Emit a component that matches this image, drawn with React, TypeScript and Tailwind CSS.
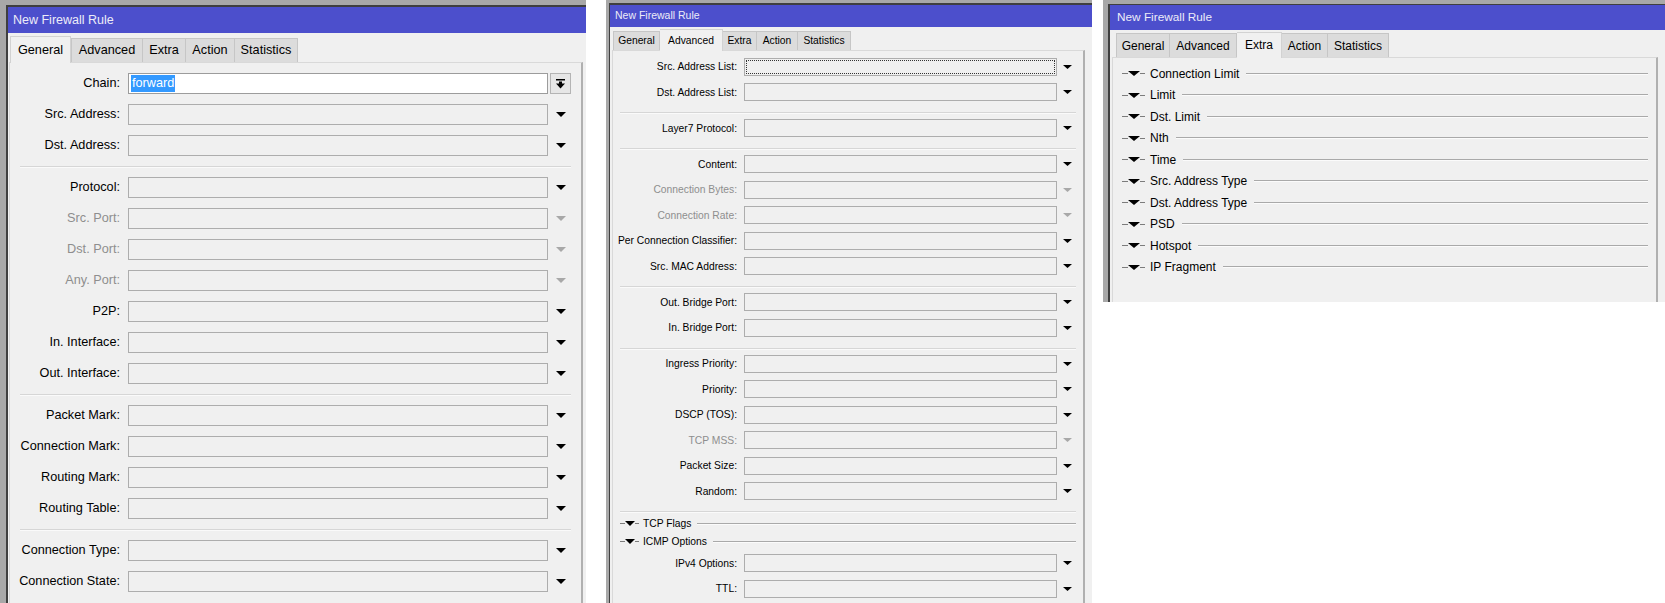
import React from "react";

function Arrow({ w, h, c = "#000" }: { w: number; h: number; c?: string }) {
  return (
    <svg width={w} height={h} viewBox={`0 0 ${w} ${h}`} className="block shrink-0">
      <polygon points={`0,0 ${w},0 ${w / 2},${h}`} fill={c} />
    </svg>
  );
}

type Row = { label: string; disabled?: boolean };

function LeftRow({ label, disabled }: Row) {
  return (
    <div className="flex items-center h-[31px] pr-[7px]">
      <div className={"w-[110px] text-right whitespace-nowrap " + (disabled ? "text-[#8e8e8e]" : "text-black")}>{label}:</div>
      <div className="ml-[8px] flex-1 h-[21px] border border-[#adadad] bg-[#f0f0f0]" />
      <div className="w-[26px] flex justify-center">
        <Arrow w={10} h={5} c={disabled ? "#a8a8a8" : "#000"} />
      </div>
    </div>
  );
}

function LeftSep() {
  return (
    <div className="h-[11px] flex flex-col justify-center px-[10px]">
      <div className="h-px bg-[#d6d6d6]" />
      <div className="h-px bg-[#fafafa]" />
    </div>
  );
}

function MidRow({ label, disabled, focus }: Row & { focus?: boolean }) {
  return (
    <div className="flex items-center h-[25.5px] pr-[6px]">
      <div className={"w-[124px] text-right whitespace-nowrap " + (disabled ? "text-[#8e8e8e]" : "text-black")}>{label}:</div>
      <div className="ml-[7px] flex-1 h-[18px] border border-[#adadad] bg-[#f0f0f0] p-px">
        {focus ? <div className="h-full w-full border border-dotted border-[#333]" /> : null}
      </div>
      <div className="w-[20px] flex justify-center">
        <Arrow w={9} h={4} c={disabled ? "#a8a8a8" : "#000"} />
      </div>
    </div>
  );
}

function MidSep() {
  return (
    <div className="h-[10.5px] pt-[7px] px-[7px]">
      <div className="h-px bg-[#d6d6d6]" />
      <div className="h-px bg-[#fafafa]" />
    </div>
  );
}

function MidHeader({ label }: { label: string }) {
  return (
    <div className="flex items-center h-[18px] pl-[7px] pr-[7px]">
      <div className="w-[5px] h-px bg-[#7c7c7c]" />
      <Arrow w={10} h={5} />
      <div className="w-[4px] h-px bg-[#7c7c7c]" />
      <div className="ml-[4px] text-black whitespace-nowrap">{label}</div>
      <div className="ml-[6px] flex-1 flex flex-col">
        <div className="h-px bg-[#a9a9a9]" />
        <div className="h-px bg-[#fbfbfb]" />
      </div>
    </div>
  );
}

function RightHeader({ label }: { label: string }) {
  return (
    <div className="flex items-center h-[21.5px] pl-[9px] pr-[8px]">
      <div className="w-[6px] h-px bg-[#7c7c7c]" />
      <Arrow w={12} h={5} />
      <div className="w-[5px] h-px bg-[#7c7c7c]" />
      <div className="ml-[5px] text-black whitespace-nowrap">{label}</div>
      <div className="ml-[7px] flex-1 flex flex-col">
        <div className="h-px bg-[#a9a9a9]" />
        <div className="h-px bg-[#fbfbfb]" />
      </div>
    </div>
  );
}

function ChainIcon() {
  return (
    <svg width="9" height="10" viewBox="0 0 9 10" className="block">
      <rect x="0" y="0" width="9" height="1.5" fill="#000" />
      <rect x="3" y="2.5" width="3" height="2.5" fill="#000" />
      <polygon points="0,4.5 9,4.5 4.5,9.5" fill="#000" />
    </svg>
  );
}

export default function App() {
  const leftG2: Row[] = [
    { label: "Protocol" },
    { label: "Src. Port", disabled: true },
    { label: "Dst. Port", disabled: true },
    { label: "Any. Port", disabled: true },
    { label: "P2P" },
    { label: "In. Interface" },
    { label: "Out. Interface" },
  ];
  const leftG3: Row[] = [
    { label: "Packet Mark" },
    { label: "Connection Mark" },
    { label: "Routing Mark" },
    { label: "Routing Table" },
  ];
  const leftG4: Row[] = [{ label: "Connection Type" }, { label: "Connection State" }];

  const midG3: Row[] = [
    { label: "Content" },
    { label: "Connection Bytes", disabled: true },
    { label: "Connection Rate", disabled: true },
    { label: "Per Connection Classifier" },
    { label: "Src. MAC Address" },
  ];
  const midG5: Row[] = [
    { label: "Ingress Priority" },
    { label: "Priority" },
    { label: "DSCP (TOS)" },
    { label: "TCP MSS", disabled: true },
    { label: "Packet Size" },
    { label: "Random" },
  ];
  const extra = [
    "Connection Limit",
    "Limit",
    "Dst. Limit",
    "Nth",
    "Time",
    "Src. Address Type",
    "Dst. Address Type",
    "PSD",
    "Hotspot",
    "IP Fragment",
  ];

  return (
    <div className="w-[1665px] h-[603px] bg-white flex items-start overflow-hidden font-['Liberation_Sans',Arial,sans-serif]">
      {/* LEFT WINDOW */}
      <div className="w-[586px] h-[603px] shrink-0 bg-[#a8a8a8] pt-[5px] pl-[6px]">
        <div className="h-full border-t-2 border-l-2 border-[#3f3f3f] bg-[#f0f0f0] flex flex-col text-[12.7px]">
          <div className="h-[26px] shrink-0 bg-[#4c4fcc] text-[#ececf8] flex items-center pl-[5px] text-[12.5px]">New Firewall Rule</div>
          <div className="relative z-10 flex items-end h-[26px] mt-[3px] pl-[2px] shrink-0">
            <div className="w-[61px] h-[27px] -mb-px bg-[#f0f0f0] border border-b-0 border-[#d2d2d2] flex justify-center pt-[4px] text-black">General</div>
            <div className="w-[72px] h-[24px] bg-[#dcdcdc] border border-b-0 border-[#c6c6c6] flex items-center justify-center text-black">Advanced</div>
            <div className="w-[43px] h-[24px] bg-[#dcdcdc] border border-b-0 border-l-0 border-[#c6c6c6] flex items-center justify-center text-black">Extra</div>
            <div className="w-[49px] h-[24px] bg-[#dcdcdc] border border-b-0 border-l-0 border-[#c6c6c6] flex items-center justify-center text-black">Action</div>
            <div className="w-[63px] h-[24px] bg-[#dcdcdc] border border-b-0 border-l-0 border-[#c6c6c6] flex items-center justify-center text-black">Statistics</div>
          </div>
          <div className="ml-[1px] w-[574px] flex-1 border border-b-0 border-[#d9d9d9] border-r-2 border-r-[#b0b0b0] pt-[5px]">
            <div className="flex items-center h-[31px] pr-[7px]">
              <div className="w-[110px] text-right text-black">Chain:</div>
              <div className="ml-[8px] flex-1 h-[21px] border border-[#9c9c9c] bg-white flex items-center pl-[2px]">
                <span className="bg-[#3399ff] text-white leading-[17px] px-px">forward</span>
              </div>
              <div className="w-[26px] flex items-center pl-[2px]">
                <div className="w-[21px] h-[21px] border border-[#b4b4b4] bg-[#e6e6e6] flex items-center justify-center">
                  <ChainIcon />
                </div>
              </div>
            </div>
            <LeftRow label="Src. Address" />
            <LeftRow label="Dst. Address" />
            <LeftSep />
            {leftG2.map((r) => (
              <LeftRow key={r.label} {...r} />
            ))}
            <LeftSep />
            {leftG3.map((r) => (
              <LeftRow key={r.label} {...r} />
            ))}
            <LeftSep />
            {leftG4.map((r) => (
              <LeftRow key={r.label} {...r} />
            ))}
          </div>
        </div>
      </div>

      <div className="w-[20px] shrink-0" />

      {/* MIDDLE WINDOW */}
      <div className="w-[486px] h-[603px] shrink-0 bg-[#a8a8a8] pt-[3px] pl-[3px]">
        <div className="h-full border-t-2 border-l border-[#3f3f3f] bg-[#f0f0f0] flex flex-col text-[10.3px]">
          <div className="h-[22px] shrink-0 bg-[#4c4fcc] text-[#ececf8] flex items-center pl-[5px] text-[10.5px]">New Firewall Rule</div>
          <div className="relative z-10 flex items-end h-[21px] mt-[2px] pl-[3px] shrink-0">
            <div className="w-[47px] h-[19px] bg-[#dcdcdc] border border-b-0 border-[#c6c6c6] flex items-center justify-center text-black">General</div>
            <div className="w-[63px] h-[22px] -mb-px bg-[#f0f0f0] border border-b-0 border-l-0 border-[#d2d2d2] flex justify-center pt-[3px] text-black">Advanced</div>
            <div className="w-[34px] h-[19px] bg-[#dcdcdc] border border-b-0 border-l-0 border-[#c6c6c6] flex items-center justify-center text-black">Extra</div>
            <div className="w-[41px] h-[19px] bg-[#dcdcdc] border border-b-0 border-l-0 border-[#c6c6c6] flex items-center justify-center text-black">Action</div>
            <div className="w-[53px] h-[19px] bg-[#dcdcdc] border border-b-0 border-l-0 border-[#c6c6c6] flex items-center justify-center text-black">Statistics</div>
          </div>
          <div className="ml-[2px] w-[473px] flex-1 border border-b-0 border-[#d9d9d9] border-r-2 border-r-[#b0b0b0] pt-[3px]">
            <MidRow label="Src. Address List" focus />
            <MidRow label="Dst. Address List" />
            <MidSep />
            <MidRow label="Layer7 Protocol" />
            <MidSep />
            {midG3.map((r) => (
              <MidRow key={r.label} {...r} />
            ))}
            <MidSep />
            <MidRow label="Out. Bridge Port" />
            <MidRow label="In. Bridge Port" />
            <MidSep />
            {midG5.map((r) => (
              <MidRow key={r.label} {...r} />
            ))}
            <MidSep />
            <MidHeader label="TCP Flags" />
            <MidHeader label="ICMP Options" />
            <MidRow label="IPv4 Options" />
            <MidRow label="TTL" />
          </div>
        </div>
      </div>

      <div className="w-[11px] shrink-0" />

      {/* RIGHT WINDOW */}
      <div className="w-[562px] h-[302px] shrink-0 bg-[#a8a8a8] pt-[4px] pl-[5px] overflow-hidden">
        <div className="h-full border-t border-l-2 border-[#3f3f3f] bg-[#f0f0f0] flex flex-col text-[12px]">
          <div className="h-[25px] shrink-0 bg-[#4c4fcc] text-[#ececf8] flex items-center pl-[7px] text-[11.8px]">New Firewall Rule</div>
          <div className="relative z-10 flex items-end h-[25px] mt-[2px] pl-[6px] shrink-0">
            <div className="w-[54px] h-[24px] bg-[#dcdcdc] border border-b-0 border-[#c6c6c6] flex items-center justify-center text-black">General</div>
            <div className="w-[67px] h-[24px] bg-[#dcdcdc] border border-b-0 border-l-0 border-[#c6c6c6] flex items-center justify-center text-black">Advanced</div>
            <div className="w-[45px] h-[26px] -mb-px bg-[#f0f0f0] border border-b-0 border-l-0 border-[#d2d2d2] flex justify-center pt-[3px] text-black">Extra</div>
            <div className="w-[46px] h-[24px] bg-[#dcdcdc] border border-b-0 border-l-0 border-[#c6c6c6] flex items-center justify-center text-black">Action</div>
            <div className="w-[61px] h-[24px] bg-[#dcdcdc] border border-b-0 border-l-0 border-[#c6c6c6] flex items-center justify-center text-black">Statistics</div>
          </div>
          <div className="ml-[2px] w-[546px] flex-1 border border-b-0 border-[#d9d9d9] border-r-2 border-r-[#b0b0b0] pt-[5px]">
            {extra.map((e) => (
              <RightHeader key={e} label={e} />
            ))}
          </div>
        </div>
      </div>
    </div>
  );
}
